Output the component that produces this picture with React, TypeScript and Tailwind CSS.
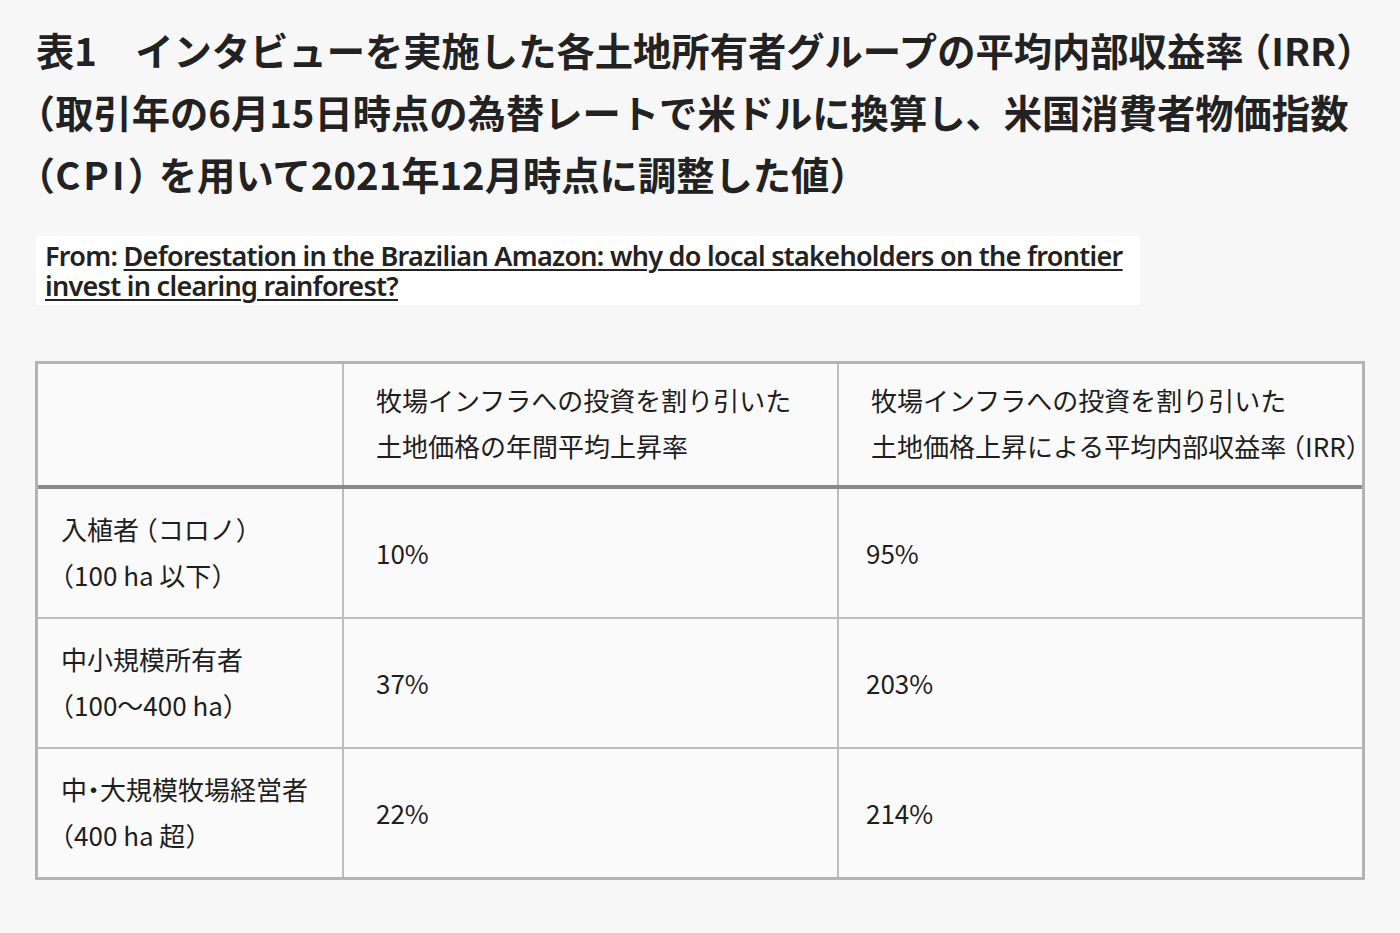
import React from 'react'

const jp = "font-['Noto_Sans_CJK_JP','Noto_Sans',sans-serif]"

// half-width punctuation (parens, middle dot) like the printed table
const H = ({ children }: { children: React.ReactNode }) => (
  <span className="[font-feature-settings:'halt']">{children}</span>
)

interface Row {
  label: [React.ReactNode, React.ReactNode]
  rate: string
  irr: string
}

const rows: Row[] = [
  {
    label: [
      <>入植者 <H>（</H>コロノ<H>）</H></>,
      <><H>（</H>100 ha 以下<H>）</H></>,
    ],
    rate: '10%',
    irr: '95%',
  },
  {
    label: [<>中小規模所有者</>, <><H>（</H>100〜400 ha<H>）</H></>],
    rate: '37%',
    irr: '203%',
  },
  {
    label: [<>中<H>・</H>大規模牧場経営者</>, <><H>（</H>400 ha 超<H>）</H></>],
    rate: '22%',
    irr: '214%',
  },
]

export default function App() {
  return (
    <div className={`min-h-[933px] w-[1400px] bg-[#f7f7f7] text-[#1c1c1c] ${jp}`}>
      <div className="px-[36px] pt-[19px]">
        {/* title */}
        <h1 className="whitespace-nowrap text-[38.3px] font-bold leading-[62px] text-[#222]">
          <div>表1　インタビューを実施した各土地所有者グループの平均内部収益率 <H>（</H>IRR<H>）</H></div>
          <div><H>（</H>取引年の6月15日時点の為替レートで米ドルに換算し、米国消費者物価指数</div>
          <div>
            <H>（</H><span className="tracking-[0.08em]">CPI</span><H>）</H>
            <span className="ml-[12px]">を用いて2021年12月時点に調整した値</span><H>）</H>
          </div>
        </h1>

        {/* source */}
        <div className="mt-[31px] flex h-[69px] w-[1104px] flex-col justify-center bg-white pl-[9px] font-['Noto_Sans',sans-serif] text-[27px] font-semibold leading-[30px] tracking-[-0.026em] text-[#222]">
          <div className="h-[30px] whitespace-nowrap">
            <span className="inline-block">From:</span>{' '}
            <a className="inline-block underline decoration-[1.5px] underline-offset-[3px]">
              Deforestation in the Brazilian Amazon: why do local stakeholders on the frontier
            </a>
          </div>
          <div className="h-[30px]">
            <a className="inline-block underline decoration-[1.5px] underline-offset-[3px]">
              invest in clearing rainforest?
            </a>
          </div>
        </div>
      </div>

      {/* table */}
      <div className="ml-[35px] mt-[56px] w-[1330px] border-[3px] border-[#b3b3b3] bg-[#fafafa] text-[26px] leading-[46px] text-[#1e1e1e]">
        <div className="grid h-[125px] grid-cols-[306px_495px_1fr] border-b-[4px] border-[#8a8a8a]">
          <div className="border-r-2 border-[#bdbdbd]" />
          <div className="flex flex-col justify-center whitespace-nowrap border-r-2 border-[#bdbdbd] pb-[4px] pl-[32px]">
            <div>牧場インフラへの投資を割り引いた</div>
            <div>土地価格の年間平均上昇率</div>
          </div>
          <div className="flex flex-col justify-center whitespace-nowrap pb-[4px] pl-[32px]">
            <div>牧場インフラへの投資を割り引いた</div>
            <div>土地価格上昇による平均内部収益率 <H>（</H>IRR<H>）</H></div>
          </div>
        </div>
        {rows.map((r, i) => (
          <div
            key={i}
            className={`grid grid-cols-[306px_495px_1fr] ${i < rows.length - 1 ? 'h-[130px] border-b-2 border-[#bdbdbd]' : 'h-[128px]'}`}
          >
            <div className="flex flex-col justify-center whitespace-nowrap border-r-2 border-[#bdbdbd] pb-[2px] pl-[23px]">
              <div>{r.label[0]}</div>
              <div>{r.label[1]}</div>
            </div>
            <div className="flex items-center border-r-2 border-[#bdbdbd] pl-[32px]">{r.rate}</div>
            <div className="flex items-center pl-[27px]">{r.irr}</div>
          </div>
        ))}
      </div>
    </div>
  )
}
